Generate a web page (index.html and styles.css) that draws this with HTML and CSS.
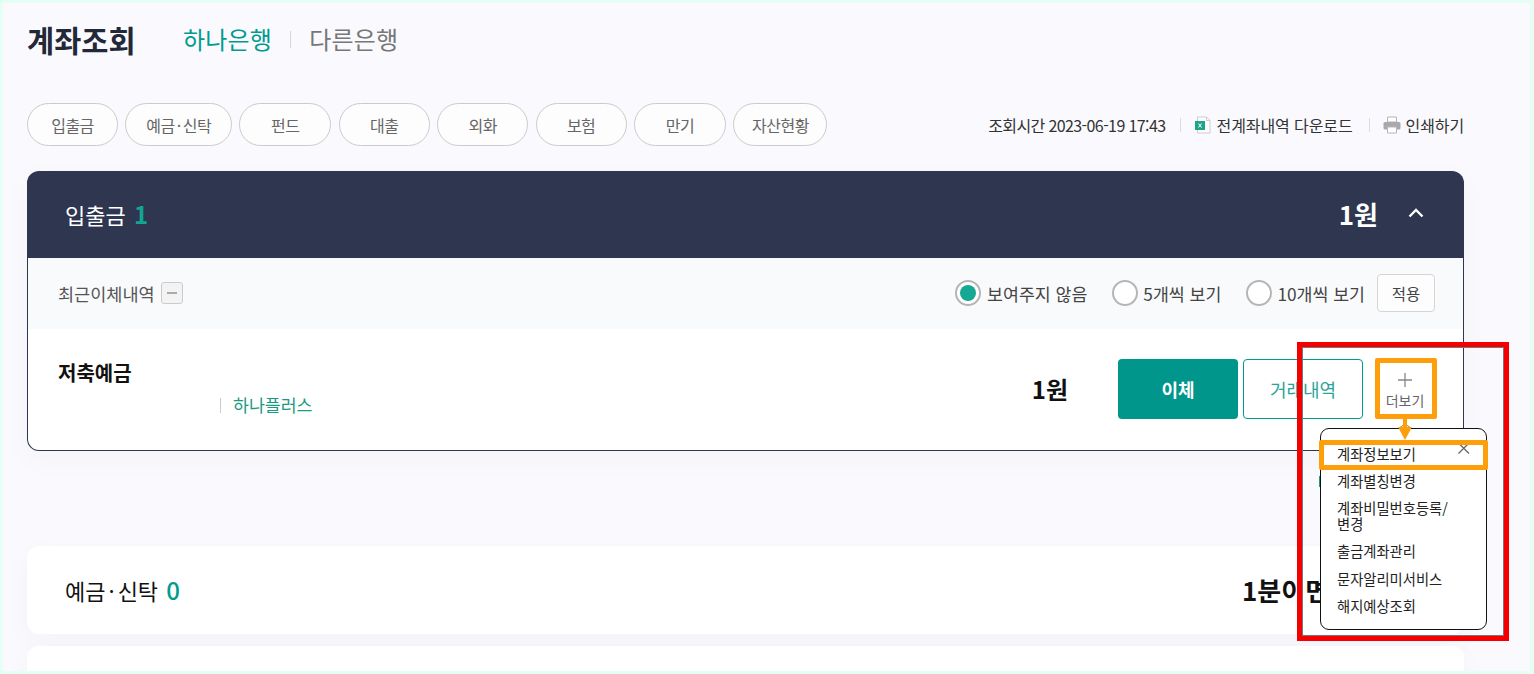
FILE: index.html
```html
<!DOCTYPE html>
<html lang="ko">
<head>
<meta charset="utf-8">
<title>계좌조회</title>
<link rel="stylesheet" href="styles.css">
</head>
<body>
<div class="frame">
  <header class="title-row">
    <h1 class="title">계좌조회</h1>
    <nav class="bank-tabs">
      <a class="bank-tab active">하나은행</a>
      <span class="bank-sep"></span>
      <a class="bank-tab">다른은행</a>
    </nav>
  </header>

  <div class="tool-row">
    <div class="chips">
      <a class="chip w91">입출금</a>
      <a class="chip w106">예금<span class="mid">·</span>신탁</a>
      <a class="chip w92">펀드</a>
      <a class="chip w91">대출</a>
      <a class="chip w91">외화</a>
      <a class="chip w91">보험</a>
      <a class="chip w92">만기</a>
      <a class="chip w94">자산현황</a>
    </div>
    <div class="tools">
      <span class="time">조회시간 2023-06-19 17:43</span>
      <span class="tool-sep"></span>
      <a class="tool-link">
        <svg class="ico" width="18" height="18" viewBox="0 0 18 18"><path d="M3.500 1h9l3.500 3.500V17h-12.500z" fill="#fff" stroke="#ccc"/><path d="M12.500 1v3.500H16" fill="none" stroke="#ccc"/><rect x="1" y="5" width="10" height="9" fill="#1ca58c"/><path d="M4.500 7.500l3 4m0-4l-3 4" stroke="#fff" stroke-width="1"/></svg>
        전계좌내역 다운로드
      </a>
      <span class="tool-sep wide"></span>
      <a class="tool-link">
        <svg class="ico" width="18" height="18" viewBox="0 0 18 18"><path d="M4.500 1h9v5h-9z" fill="#fff" stroke="#b5b5b5"/><rect x="0.500" y="6" width="17" height="7.500" rx="1.500" fill="#a9a9a9"/><path d="M4.500 11h9v6h-9z" fill="#fff" stroke="#b5b5b5"/><rect x="2" y="8" width="1.500" height="1" fill="#4ec9a5"/></svg>
        인쇄하기
      </a>
    </div>
  </div>

  <section class="card open">
    <div class="card-head dark">
      <div class="head-left">입출금 <span class="count">1</span></div>
      <div class="head-right">
        <strong class="head-sum">1원</strong>
        <svg class="chev" width="16" height="10" viewBox="0 0 16 10"><path d="M1.500 8.500L8 2l6.500 6.500" fill="none" stroke="#fff" stroke-width="2.400"/></svg>
      </div>
    </div>
    <div class="sub-bar">
      <div class="recent">최근이체내역 <span class="minus-box"><i></i></span></div>
      <div class="radios">
        <label class="radio on"><span class="dot"></span>보여주지 않음</label>
        <label class="radio"><span class="dot"></span>5개씩 보기</label>
        <label class="radio"><span class="dot"></span>10개씩 보기</label>
        <button class="apply">적용</button>
      </div>
    </div>
    <div class="acct">
      <div class="acct-info">
        <div class="acct-name">저축예금</div>
        <div class="acct-sub"><span class="sub-sep"></span><a class="plus-link">하나플러스</a></div>
      </div>
      <div class="acct-right">
        <strong class="acct-sum">1원</strong>
        <button class="btn-fill">이체</button>
        <button class="btn-line">거래내역</button>
        <button class="btn-more">
          <svg width="16" height="16" viewBox="0 0 16 16"><path d="M8 1v14M1 8h14" stroke="#888" stroke-width="1.300"/></svg>
          <span>더보기</span>
        </button>
      </div>
    </div>
  </section>

  <section class="card plain">
    <div class="card-head">
      <div class="head-left">예금<span class="mid">·</span>신탁 <span class="count">0</span></div>
      <strong class="head-promo">1분이면</strong>
    </div>
  </section>

  <section class="card stub"></section>

  <!-- overlays -->
  <span class="peek"></span>
  <div class="popup">
    <ul class="menu">
      <li>계좌정보보기</li>
      <li>계좌별칭변경</li>
      <li class="two-line">계좌비밀번호등록/<br>변경</li>
      <li>출금계좌관리</li>
      <li>문자알리미서비스</li>
      <li>해지예상조회</li>
    </ul>
    <svg class="close" width="14" height="11" viewBox="0 0 14 11"><path d="M1.500 0l10.500 10.500M12 0L1.500 10.500" stroke="#666" stroke-width="1.300"/></svg>
  </div>
  <div class="mark-red"></div>
  <div class="mark-btn"></div>
  <svg class="mark-arrow" width="16" height="24" viewBox="0 0 16 24"><path d="M2 10L8 6l6 4" fill="none" stroke="#888" stroke-width="1"/><path d="M8 0v10" stroke="#ff9e0b" stroke-width="4"/><path d="M1 9h14l-7 13z" fill="#ff9e0b"/></svg>
  <div class="mark-row"></div>
</div>
</body>
</html>
```
FILE: styles.css
```css
* { box-sizing: border-box; }
html, body { margin: 0; height: 100%; overflow: hidden; }
body {
  font-family: "Noto Sans CJK KR", "Noto Sans", sans-serif;
  background: #e6fff5;
  color: #222;
}
.frame {
  position: relative;
  margin: 3px 4px 0 3px;
  height: 668px;
  padding: 0 66px 0 24px;
  background: #fafafe;
  overflow: hidden;
}
.title-row { display: flex; align-items: center; height: 72px; }
.title { margin: 0; font-size: 29.500px; font-weight: 700; color: #232838; width: 156px; line-height: 40px; }
.bank-tabs { display: flex; align-items: center; }
.bank-tab { font-size: 24px; letter-spacing: 0.2px; color: #777; line-height: 32px; }
.bank-tab.active { color: #009b8f; }
.bank-sep { width: 1px; height: 17px; background: #d8d8d8; margin: 0 18px; }

.tool-row { display: flex; justify-content: space-between; align-items: center; margin-top: 28px; height: 43px; }
.chips { display: flex; gap: 7.430px; }
.chip {
  display: flex; align-items: center; justify-content: center;
  height: 43px; border: 1px solid #cbcbcb; border-radius: 22px;
  font-size: 16px; letter-spacing: -0.5px; color: #666; background: #fdfdfe;
}
.mid { margin: 0 2px; }
.w91 { width: 91px; }
.w92 { width: 92px; }
.w94 { width: 94px; }
.w106 { width: 106.500px; }
.tools { display: flex; align-items: center; font-size: 16px; color: #333; }
.time { letter-spacing: -0.6px; margin-right: 1px; }
.tool-sep { width: 1px; height: 14px; background: #ddd; margin: 0 13px; }
.tool-sep.wide { margin-left: 16px; }
.tool-link { display: flex; align-items: center; gap: 5px; letter-spacing: -0.1px; }
.ico { flex: none; }

.card { background: #fff; border-radius: 12px; box-shadow: 0 8px 30px rgba(30, 40, 70, 0.03); }
.open { margin-top: 25px; height: 280px; display: flex; flex-direction: column; }
.card-head { display: flex; justify-content: space-between; align-items: center; padding: 0 38px 2px; }
.dark { height: 87px; background: #2e3650; border-radius: 12px 12px 0 0; color: #fff; }
.head-left { font-size: 22px; }
.head-left .mid { margin: 0 3px; }
.count { font-size: 24px; font-weight: 500; color: #009b8f; margin-left: 2px; }
.dark .count { color: #12a593; font-weight: 700; }
.head-right { display: flex; align-items: center; gap: 30px; padding-right: 2px; }
.head-sum { font-size: 26px; font-weight: 700; }
.chev { margin-bottom: 1px; }
.sub-bar {
  display: flex; justify-content: space-between; align-items: center;
  height: 71px; padding: 0 28px 1px 30px;
  background: #f9fafc; border: solid #2e3650; border-width: 0 1px;
}
.recent { display: flex; align-items: center; gap: 6px; font-size: 17.500px; color: #555; }
.minus-box {
  display: flex; align-items: center; justify-content: center;
  width: 22px; height: 22px; border: 1px solid #ccc; border-radius: 3px; background: #f3f3f3;
}
.minus-box i { width: 10px; height: 2px; background: #aaa; }
.radios { display: flex; align-items: center; }
.radio { display: flex; align-items: center; gap: 5px; font-size: 17.300px; color: #444; margin-right: 25px; }
.radio.on { gap: 6px; }
.radio:nth-child(3) { margin-right: 12px; }
.dot { width: 26px; height: 26px; border: 2px solid #b5b5b5; border-radius: 50%; background: #fff; position: relative; }
.on .dot::after { content: ""; position: absolute; inset: 3px; border-radius: 50%; background: #16a892; }
.apply {
  width: 58px; height: 38px; border: 1px solid #d5d5d5; border-radius: 4px; background: #fdfdfe;
  font: inherit; font-size: 15.500px; color: #444; padding: 0;
}
.acct {
  flex: 1; display: flex; justify-content: space-between;
  padding: 30px 28px 0 30px;
  border: 1px solid #2e3650; border-top: 0; border-radius: 0 0 12px 12px;
}
.acct-name { font-size: 20px; font-weight: 700; color: #111; line-height: 28px; }
.acct-sub { display: flex; align-items: center; margin-top: 5px; padding-left: 162px; }
.sub-sep { width: 1px; height: 15px; background: #ccc; margin-right: 12px; }
.plus-link { font-size: 17.300px; color: #1a9a82; line-height: 26px; }
.acct-right { display: flex; align-items: flex-start; }
.acct-sum { font-size: 24px; font-weight: 700; color: #111; margin: 0 50px 0 0; line-height: 60px; }
.btn-fill {
  width: 120px; height: 60px; border: 0; border-radius: 4px; background: #00968c; color: #fff;
  font: inherit; font-size: 18px; font-weight: 700; padding: 0;
}
.btn-line {
  width: 120px; height: 60px; margin-left: 5px; border: 1px solid #009b8f; border-radius: 4px; background: #fff; color: #2aa498;
  font: inherit; font-size: 18px; padding: 0;
}
.btn-more {
  width: 60px; height: 60px; margin-left: 12px; border: 0; background: #fff; padding: 13px 0 0;
  display: flex; flex-direction: column; align-items: center; gap: 3px;
  font: inherit; font-size: 14px; color: #666; line-height: 18px;
}

.plain { margin-top: 95px; height: 88px; }
.plain .card-head { height: 88px; justify-content: flex-start; }
.plain .head-left { color: #111; flex: 1; }
.head-promo { font-size: 26px; font-weight: 700; color: #111; white-space: nowrap; width: 184px; }
.stub { margin-top: 12px; height: 60px; }

.peek { position: absolute; left: 1316px; top: 473px; width: 2px; height: 11px; background: #1a9a82; }
.popup {
  position: absolute; left: 1317px; top: 425px; width: 167px; height: 202px;
  background: #fff; border: 1px solid #111; border-radius: 9px;
}
.menu { list-style: none; margin: 0; padding: 10.500px 16px 0; font-size: 14.300px; color: #222; line-height: 15px; }
.menu li { padding: 6px 0 6.500px; }
.menu .two-line { line-height: 16px; padding: 5.500px 0 5px; }
.close { position: absolute; left: 136px; top: 14px; }

.mark-red { position: absolute; left: 1294px; top: 339px; width: 212px; height: 299px; border: 5px solid #f40000; box-shadow: inset 0 0 0 1px #777; }
.mark-btn { position: absolute; left: 1372px; top: 355px; width: 62px; height: 61px; border: 5px solid #ff9e0b; border-radius: 2px; }
.mark-arrow { position: absolute; left: 1394px; top: 415px; }
.mark-row { position: absolute; left: 1316px; top: 437px; width: 169px; height: 30px; border: 5px solid #ff9e0b; border-radius: 2px; }
```
